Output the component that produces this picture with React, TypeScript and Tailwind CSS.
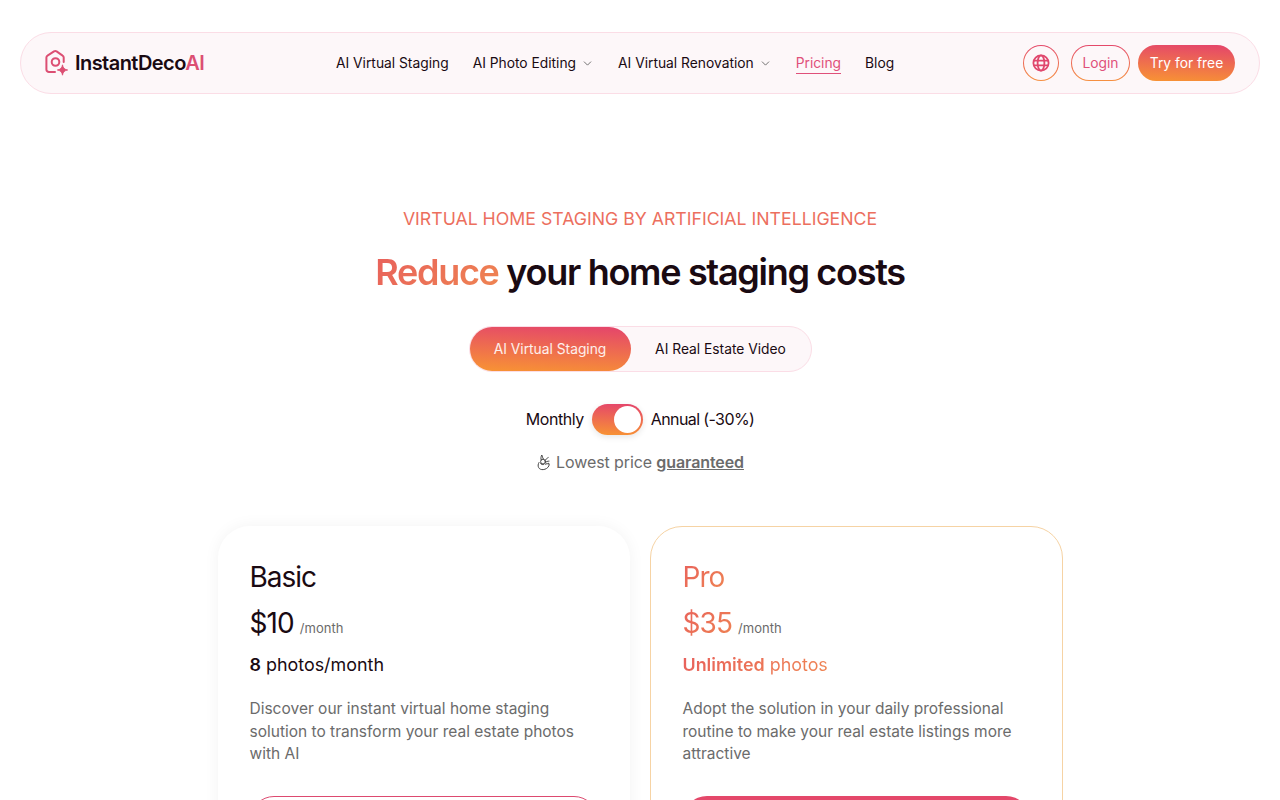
import React from "react";
import { ChevronDown } from "lucide-react";

const gradient = "bg-[linear-gradient(183deg,#e4446c,#f89433)]";
const gradientText = "bg-[linear-gradient(135deg,#e8605c,#ef8551)] bg-clip-text text-transparent";

const LogoMark: React.FC = () => (
  <svg width="26" height="28" viewBox="0 0 26 28" fill="none">
    <path
      d="M10 23H4a2.6 2.6 0 0 1-2.6-2.6V8.6c0-.9.4-1.6 1.1-2L9 2.4a2.4 2.4 0 0 1 2.6 0l6 4.2c.7.4 1.1 1.1 1.1 2V13"
      stroke="#dc4f73"
      strokeWidth="2"
      strokeLinecap="round"
    />
    <circle cx="10.5" cy="13" r="3.8" stroke="#dc4f73" strokeWidth="2" />
    <path
      d="M17.5 15.8c.5 3 2 4.7 5.2 5.2-3.2.5-4.7 2.2-5.2 5.2-.5-3-2-4.7-5.2-5.2 3.2-.5 4.7-2.2 5.2-5.2z"
      fill="#dc4f73"
      stroke="#dc4f73"
      strokeWidth="0.8"
      strokeLinejoin="round"
    />
  </svg>
);

const GlobeIcon: React.FC = () => (
  <svg width="18" height="18" viewBox="0 0 18 18" fill="none" stroke="#e0476d" strokeWidth="1.8">
    <circle cx="9" cy="9" r="7.6" />
    <ellipse cx="9" cy="9" rx="3.4" ry="7.6" />
    <path d="M1.8 6.6h14.4M1.8 11.4h14.4" />
  </svg>
);

const OkHandIcon: React.FC = () => (
  <svg width="16" height="18" viewBox="0 0 16 18" fill="none" stroke="#444" strokeWidth="1" strokeLinecap="round" strokeLinejoin="round">
    <path d="M3 9.5c-1 1.6-1.2 3.4-.4 5 .8 1.6 2.6 2.3 4.6 2.1 2.4-.2 4.6-1.5 5.6-3.6.6-1.3.4-2.4-.5-3" />
    <circle cx="7" cy="8.6" r="2.4" />
    <path d="M5.2 7c-.6-1.6-.3-3 .6-5 .4 1.6.9 2.8 1.6 4M9 7.6c.6-1.2 1.7-2.2 3.2-3M9.4 9.4c1-.8 2.3-1.3 3.6-1.3M9.2 11.2c1.2-.5 2.6-.7 3.8-.3M4.6 10.6c.7.8 1.7 1.2 2.8 1" />
  </svg>
);

const NavItem: React.FC<{ label: string; caret?: boolean; active?: boolean }> = ({ label, caret, active }) => (
  <a className={`flex items-center gap-[4px] text-[13.8px] ${active ? "text-[#e0507a]" : "text-[#1a0a12]"}`}>
    <span className={active ? "border-b border-[#e0507a] leading-[20px]" : "leading-[20px]"}>{label}</span>
    {caret && <ChevronDown size={13} strokeWidth={1.5} className="text-[#555] ml-[1px]" />}
  </a>
);

const PlanCard: React.FC<{
  title: string;
  price: string;
  quota: string;
  quotaRest: string;
  text: string[];
  pro?: boolean;
}> = ({ title, price, quota, quotaRest, text, pro }) => {
  const accent = pro ? gradientText : "text-[#1a0a12]";
  return (
    <div
      className={`h-[480px] rounded-[32px] bg-white px-8 ${
        pro ? "border border-[#f6d3a4] -ml-px w-[413px] pt-[32px]" : "w-[412px] pt-[33px] shadow-[0_0_16px_rgba(0,0,0,0.05)]"
      }`}
    >
      <h3 className={`text-[28px] leading-[36px] tracking-[-1px] w-fit ${accent}`}>{title}</h3>
      <div className="flex items-baseline gap-[6px] mt-[5px] h-[46px] leading-[46px]">
        <span className={`text-[28px] tracking-[-0.9px] ${accent}`}>{price}</span>
        <span className="text-[13px] text-[#6b6b6b]">/month</span>
      </div>
      <p className={`mt-[5px] text-[17.9px] leading-[28px] w-fit ${accent}`}>
        <span className="font-semibold">{quota}</span> {quotaRest}
      </p>
      <p className="mt-[19px] text-[15.5px] leading-[22.5px] text-[#6b6b6b] whitespace-nowrap">
        {text.map((line) => (
          <span key={line} className="block">
            {line}
          </span>
        ))}
      </p>
      <div
        className={`mt-[30px] h-12 rounded-full ${
          pro ? "bg-[#e4486a]" : "border border-[#dd4a70] bg-white"
        }`}
      />
    </div>
  );
};

const App: React.FC = () => {
  return (
    <div className="h-screen overflow-hidden bg-white font-['Inter',sans-serif] text-[#1a0a12]">
      <div className="px-5 pt-8">
        <nav className="h-[62px] rounded-full border border-[#fbdde6] bg-[#fdf7f9] flex items-center pl-6 pr-6 relative">
          <div className="flex items-center gap-[4px] w-[291px]">
            <LogoMark />
            <span className="text-[20px] font-semibold tracking-[-0.55px] leading-none">
              InstantDeco<span className="text-[#dc4f73]">AI</span>
            </span>
          </div>
          <div className="flex items-center gap-6">
            <NavItem label="AI Virtual Staging" />
            <NavItem label="AI Photo Editing" caret />
            <NavItem label="AI Virtual Renovation" caret />
            <NavItem label="Pricing" active />
            <NavItem label="Blog" />
          </div>
          <div className="ml-auto flex items-center gap-2">
            <div className="rounded-full p-px bg-[linear-gradient(180deg,#e4486a,#f69040)] mr-[4px]">
              <div className="w-[34px] h-[34px] rounded-full bg-[#fdf7f9] flex items-center justify-center">
                <GlobeIcon />
              </div>
            </div>
            <div className="rounded-full p-px bg-[linear-gradient(180deg,#e4486a,#f69040)]">
              <div className="h-[34px] w-[57px] rounded-full bg-[#fdf7f9] flex items-center justify-center text-[13.8px] text-[#e0507a]">
                Login
              </div>
            </div>
            <div className={`h-9 w-[97px] rounded-full flex items-center justify-center text-[13.8px] text-white ${gradient}`}>
              Try for free
            </div>
          </div>
        </nav>
      </div>

      <section className="flex flex-col items-center pt-[113px]">
        <p className="text-[17.7px] leading-[24px] text-[#ec6f5e]">VIRTUAL HOME STAGING BY ARTIFICIAL INTELLIGENCE</p>
        <h1 className="mt-[19px] text-[36px] leading-[44px] font-semibold tracking-[-1.3px] text-[#1a0a12]">
          <span className={gradientText}>Reduce</span> your home staging costs
        </h1>

        <div className="mt-[32px] flex h-[46px] rounded-full border border-[#fbdde6] bg-[#fdf7f9] text-[13.8px]">
          <div className={`w-[161px] rounded-full flex items-center justify-center text-white/90 ${gradient}`}>
            AI Virtual Staging
          </div>
          <div className="w-[180px] flex items-center justify-center">AI Real Estate Video</div>
        </div>

        <div className="mt-[31px] flex items-center gap-2 text-base tracking-[-0.6px] leading-[32px]">
          <span className="tracking-[-0.45px]">Monthly</span>
          <div className={`w-[51px] h-[31px] rounded-full p-[2px] flex justify-end shadow-[0_2px_6px_rgba(0,0,0,0.1)] ${gradient}`}>
            <div className="w-[27px] h-[27px] rounded-full bg-white" />
          </div>
          <span>Annual (-30%)</span>
        </div>

        <p className="mt-[15px] flex items-center gap-[4px] text-base tracking-[-0.1px] leading-[24px] text-[#6b6b6b]">
          <OkHandIcon />
          <span>
            Lowest price <span className="font-semibold underline">guaranteed</span>
          </span>
        </p>

        <div className="mt-[52px] flex gap-[21px]">
          <PlanCard
            title="Basic"
            price="$10"
            quota="8"
            quotaRest="photos/month"
            text={[
              "Discover our instant virtual home staging",
              "solution to transform your real estate photos",
              "with AI",
            ]}
          />
          <PlanCard
            pro
            title="Pro"
            price="$35"
            quota="Unlimited"
            quotaRest="photos"
            text={[
              "Adopt the solution in your daily professional",
              "routine to make your real estate listings more",
              "attractive",
            ]}
          />
        </div>
      </section>
    </div>
  );
};

export default App;
